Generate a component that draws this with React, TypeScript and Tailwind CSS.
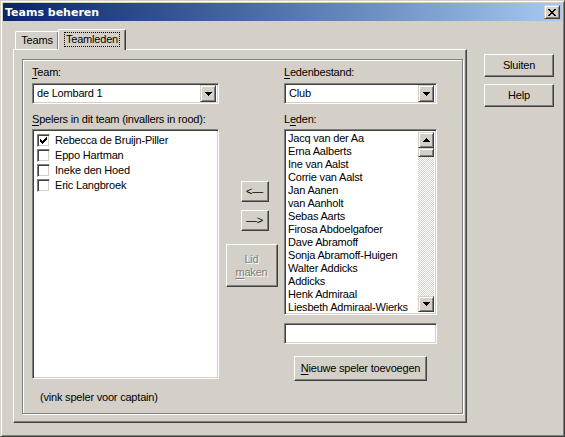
import React from "react";

const font = "font-['Liberation_Sans',Arial,sans-serif]";

// classic 3D borders
const raised =
  "border border-t-white border-l-white border-b-[#404040] border-r-[#404040] shadow-[inset_-1px_-1px_#808080]";
const raisedSmall =
  "border border-t-[#d4d0c8] border-l-[#d4d0c8] border-b-[#404040] border-r-[#404040] shadow-[inset_1px_1px_#fff,inset_-1px_-1px_#808080]";
const sunken =
  "border border-t-[#808080] border-l-[#808080] border-b-white border-r-white shadow-[inset_1px_1px_#404040,inset_-1px_-1px_#d4d0c8]";

function Arrow({ up }: { up?: boolean }) {
  return (
    <svg width="7" height="4" viewBox="0 0 7 4">
      {up ? <path d="M3 0h1v1h1v1h1v1h1v1H0V3h1V2h1V1h1z" fill="#000" /> : <path d="M0 0h7v1H6v1H5v1H4v1H3V3H2V2H1V1H0z" fill="#000" />}
    </svg>
  );
}

function Combo({ value }: { value: string }) {
  return (
    <div className={`${sunken} h-[21px] bg-white flex items-center p-[2px]`}>
      <span className="flex-1 pl-[2px] text-[11px] leading-[13px] text-black">{value}</span>
      <div className={`${raisedSmall} w-[16px] h-[17px] bg-[#d4d0c8] flex items-center justify-center`}>
        <Arrow />
      </div>
    </div>
  );
}

function Check({ checked }: { checked?: boolean }) {
  return (
    <div className={`${sunken} w-[13px] h-[13px] bg-white flex items-center justify-center shrink-0`}>
      {checked && (
        <svg width="7" height="7" viewBox="0 0 7 7">
          <path d="M6 0h1v3H6v1H5v1H4v1H3v1H2V6H1V5H0V2h1v1h1v1h1V3h1V2h1V1h1z" fill="#000" />
        </svg>
      )}
    </div>
  );
}

const spelers = [
  { name: "Rebecca de Bruijn-Piller", captain: true },
  { name: "Eppo Hartman" },
  { name: "Ineke den Hoed" },
  { name: "Eric Langbroek" },
];

const leden = [
  "Jacq van der Aa",
  "Erna Aalberts",
  "Ine van Aalst",
  "Corrie van Aalst",
  "Jan Aanen",
  "van Aanholt",
  "Sebas Aarts",
  "Firosa Abdoelgafoer",
  "Dave Abramoff",
  "Sonja Abramoff-Huigen",
  "Walter Addicks",
  "Addicks",
  "Henk Admiraal",
  "Liesbeth Admiraal-Wierks",
];

export default function App() {
  return (
    <div className={`${font} w-[565px] h-[437px] bg-[#d4d0c8] border border-t-[#d4d0c8] border-l-[#d4d0c8] border-b-[#404040] border-r-[#404040] shadow-[inset_1px_1px_#fff,inset_-1px_-1px_#808080] p-[2px] text-[11px] tracking-[-0.2px] text-black select-none`}>
      {/* Title bar */}
      <div className="h-[18px] bg-linear-to-r from-[#0a246a] to-[#a6caf0] flex items-center justify-between pl-[2px] pr-[2px]">
        <span className="text-white font-bold text-[11px] tracking-normal leading-[13px] font-['DejaVu_Sans',Verdana,sans-serif]">Teams beheren</span>
        <div className={`${raisedSmall} w-[16px] h-[14px] bg-[#d4d0c8] flex items-center justify-center`}>
          <svg width="8" height="7" viewBox="0 0 8 7">
            <path d="M0 0h2v1h1v1h2V1h1V0h2v1H7v1H6v1H5v1h1v1h1v1h1v1H6V6H5V5H3v1H2v1H0V6h1V5h1V4h1V3H2V2H1V1H0z" fill="#000" />
          </svg>
        </div>
      </div>

      <div className="flex items-start">
        {/* Tab control */}
        <div className="ml-[10px] mt-[8px]">
          <div className="flex items-end h-[20px] relative z-10">
            <div className="ml-[2px] w-[44px] h-[18px] border-t border-l border-t-white border-l-white border-r border-r-[#404040] shadow-[inset_-1px_0_#808080] rounded-tl-[2px] rounded-tr-[2px] flex items-center justify-center leading-[13px]">
              Teams
            </div>
            <div className="-ml-[1px] w-[68px] h-[21px] -mb-[1px] bg-[#d4d0c8] border-t border-l border-t-white border-l-white border-r border-r-[#404040] shadow-[inset_-1px_0_#808080] rounded-tl-[2px] rounded-tr-[2px] flex items-start justify-center pt-[2px]">
              <span className="border border-dotted border-black px-[1px] leading-[13px]">Teamleden</span>
            </div>
          </div>
          <div className="w-[454px] h-[374px] border border-t-white border-l-white border-b-[#404040] border-r-[#404040] shadow-[inset_-1px_-1px_#808080] pl-[8px] pt-[9px]">
            {/* etched group */}
            <div className="w-[441px] h-[355px] border border-[#808080] shadow-[inset_1px_1px_#fff,1px_1px_#fff] flex pl-[9px] pt-[5px]">
              {/* Left column */}
              <div className="w-[187px] flex flex-col">
                <div className="h-[14px] leading-[14px]">
                  <span className="underline underline-offset-[2px]">T</span>eam:
                </div>
                <div className="mt-[4px]">
                  <Combo value="de Lombard 1" />
                </div>
                <div className="mt-[8px] h-[14px] leading-[14px]">
                  <span className="underline underline-offset-[2px]">S</span>pelers in dit team (invallers in rood):
                </div>
                <div className={`${sunken} mt-[3px] h-[250px] bg-white p-[2px] pl-[4px] pt-[3px]`}>
                  {spelers.map((s) => (
                    <div key={s.name} className="h-[15px] flex items-center gap-[5px]">
                      <Check checked={s.captain} />
                      <span className="leading-[13px]">{s.name}</span>
                    </div>
                  ))}
                </div>
                <div className="mt-[11px] ml-[8px] leading-[14px]">(vink speler voor captain)</div>
              </div>

              {/* Middle column */}
              <div className="w-[65px] flex flex-col items-center pt-[116px]">
                <button className={`${raised} ml-[6px] w-[28px] h-[21px] bg-[#d4d0c8] flex items-center justify-center leading-none`}>
                  &lt;—
                </button>
                <button className={`${raised} ml-[6px] mt-[8px] w-[28px] h-[21px] bg-[#d4d0c8] flex items-center justify-center leading-none`}>
                  —&gt;
                </button>
                <button className={`${raised} mt-[13px] w-[52px] h-[43px] bg-[#d4d0c8] flex flex-col items-center justify-center leading-[13px] text-[#808080] [text-shadow:1px_1px_#fff]`}>
                  <span>Lid</span>
                  <span>
                    <span className="underline underline-offset-[2px]">m</span>aken
                  </span>
                </button>
              </div>

              {/* Right column */}
              <div className="w-[153px] flex flex-col">
                <div className="h-[14px] leading-[14px]">
                  <span className="underline underline-offset-[2px]">L</span>edenbestand:
                </div>
                <div className="mt-[4px]">
                  <Combo value="Club" />
                </div>
                <div className="mt-[8px] h-[14px] leading-[14px]">
                  L<span className="underline underline-offset-[2px]">e</span>den:
                </div>
                <div className={`${sunken} mt-[3px] h-[186px] bg-white p-[2px] flex`}>
                  <div className="flex-1 pl-[1px] overflow-hidden">
                    {leden.map((l) => (
                      <div key={l} className="h-[13px] leading-[13px] whitespace-nowrap">
                        {l}
                      </div>
                    ))}
                  </div>
                  <div className="w-[16px] flex flex-col">
                    <div className={`${raisedSmall} h-[16px] bg-[#d4d0c8] flex items-center justify-center`}>
                      <Arrow up />
                    </div>
                    <div className={`${raisedSmall} h-[9px] bg-[#d4d0c8]`} />
                    <div className="flex-1 bg-[repeating-conic-gradient(#fff_0_25%,#d4d0c8_0_50%)] bg-[length:2px_2px]" />
                    <div className={`${raisedSmall} h-[16px] bg-[#d4d0c8] flex items-center justify-center`}>
                      <Arrow />
                    </div>
                  </div>
                </div>
                <div className={`${sunken} mt-[8px] h-[21px] bg-white`} />
                <div className="mt-[12px] flex justify-center">
                  <button className={`${raised} w-[133px] h-[25px] bg-[#d4d0c8] flex items-center justify-center leading-[13px]`}>
                    <span>
                      <span className="underline underline-offset-[2px]">N</span>ieuwe speler toevoegen
                    </span>
                  </button>
                </div>
              </div>
            </div>
          </div>
        </div>

        {/* Right buttons */}
        <div className="ml-[17px] mt-[33px] flex flex-col gap-[7px]">
          <button className={`${raised} w-[70px] h-[23px] bg-[#d4d0c8] flex items-center justify-center leading-[13px]`}>
            Sluiten
          </button>
          <button className={`${raised} w-[70px] h-[23px] bg-[#d4d0c8] flex items-center justify-center leading-[13px]`}>
            Help
          </button>
        </div>
      </div>
    </div>
  );
}
